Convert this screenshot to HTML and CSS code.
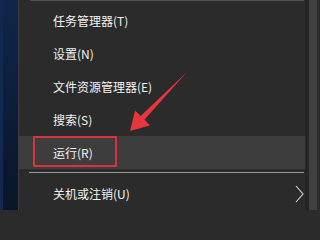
FILE: index.html
```html
<!DOCTYPE html>
<html lang="zh-CN">
<head>
<meta charset="utf-8">
<link rel="stylesheet" href="styles.css">
</head>
<body>
<div class="screen">
  <div class="desktop"></div>
  <div class="edge"></div>
  <div class="menu">
    <div class="sep sep-top"></div>
    <div class="item">任务管理器(T)</div>
    <div class="item">设置(N)</div>
    <div class="item">文件资源管理器(E)</div>
    <div class="item">搜索(S)</div>
    <div class="item active">运行(R)<span class="mark"></span></div>
    <div class="sep"></div>
    <div class="item sub">关机或注销(U)
      <svg class="chev" width="9" height="18" viewBox="0 0 9 18"><polyline points="1,1 8,9 1,17" fill="none" stroke="#d8d8d8" stroke-width="1.1"/></svg>
    </div>
  </div>
  <div class="gap"></div>
  <div class="side"></div>
  <svg class="arrow" width="317" height="210" viewBox="0 0 317 210">
    <polygon points="187,72 144.6,119.6 150,125.5 130,131 135,110.5 140.6,116" fill="#e5363c"/>
  </svg>
</div>
</body>
</html>
```
FILE: styles.css
```css
html, body {
  margin: 0;
  padding: 0;
  background: #2b2b2b;
}
.screen {
  position: relative;
  width: 317px;
  height: 210px;
  overflow: hidden;
  display: flex;
  font-family: "Noto Sans CJK SC", "Noto Sans", sans-serif;
}
.desktop {
  width: 18px;
  flex: none;
  background: linear-gradient(180deg, #0f2649 0%, #0c1d38 55%, #0a1527 100%);
  box-shadow: inset 4px 0 0 -1px #11294f;
}
.edge {
  width: 1px;
  flex: none;
  background: #3a3d42;
}
.menu {
  width: 286px;
  flex: none;
  background: #2b2b2b;
  display: flex;
  flex-direction: column;
}
.sep {
  height: 1px;
  margin: 3px 1px 4px 10px;
  background: #9a9a9a;
}
.sep-top {
  height: 2px;
  margin: 0 1px 3px 11px;
  background: #505050;
}
.item {
  position: relative;
  height: 33px;
  flex: none;
  display: flex;
  align-items: center;
  padding-left: 34px;
  color: #f2f2f2;
  font-size: 12px;
}
.item.active {
  background: #3d3d3d;
}
.mark {
  position: absolute;
  left: 14px;
  top: 0;
  width: 80px;
  height: 27px;
  border: 2px solid #d8333b;
}
.chev {
  position: absolute;
  right: 1px;
  top: 8px;
}
.gap {
  width: 4px;
  flex: none;
  background: #262626;
}
.side {
  flex: 1;
  background: #404040;
}
.arrow {
  position: absolute;
  left: 0;
  top: 0;
}
```
